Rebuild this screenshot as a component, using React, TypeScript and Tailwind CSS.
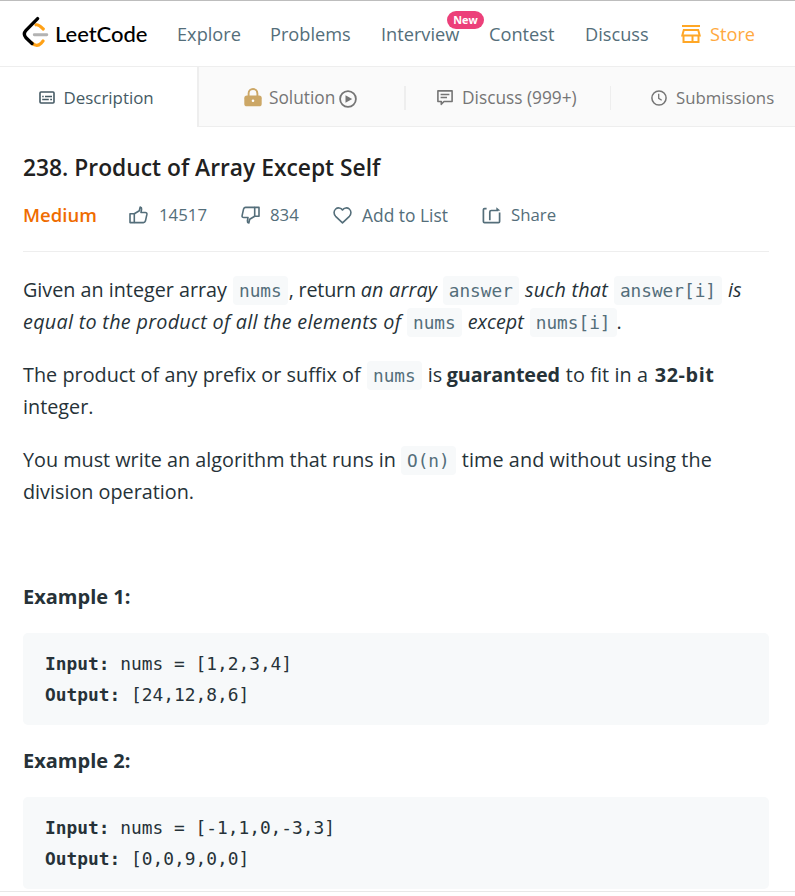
import React from "react";

type IconProps = { className?: string };

const Logo = () => (
  <svg width="27" height="32" viewBox="22 16 27 32" fill="none" strokeLinecap="round" className="mb-[5px] block shrink-0">
    <path d="M36 24.800c3-.6 4.700 1.800 7.300 4.200" stroke="#ffa116" strokeWidth="3.200" />
    <path d="M32 43c3.300 3.200 6 3.300 9 .4l2-2.400" stroke="#ffa116" strokeWidth="3.200" />
    <path d="M34.300 34.700H46.800" stroke="#b3b3b3" strokeWidth="2.900" />
    <path d="M37.600 18.600 26 30.400c-2.100 2.300-2.100 5.100 0 7.400L32 43.500" stroke="#000" strokeWidth="3.300" />
  </svg>
);

const StoreIcon = () => (
  <svg width="20" height="20" viewBox="0 0 20 20" fill="none" stroke="#ffa726" strokeWidth="2" className="block shrink-0">
    <path d="M1 2h18" />
    <path d="M2.800 6h14.400l1.500 5.500H1.300z" />
    <path d="M2.500 11v7h15v-7M11.500 11v7" />
  </svg>
);

const DescriptionIcon = () => (
  <svg width="16" height="13" viewBox="0 0 16 13" fill="none" stroke="#455a64" className="block shrink-0">
    <rect x="1" y="1" width="14" height="11" rx="1" strokeWidth="1.600" />
    <path d="M3.200 5.500h1.500M6 5.500h7M3.200 8.500h6.600M11.200 8.500h1.800" strokeWidth="1.300" />
  </svg>
);

const LockIcon = () => (
  <svg width="18" height="19" viewBox="0 0 18 19" className="block shrink-0">
    <path d="M4.600 9V5.400a4.400 4.400 0 0 1 8.800 0V9" fill="none" stroke="#cca766" strokeWidth="1.900" />
    <rect x=".3" y="7.600" width="17.400" height="10.700" rx="2.600" fill="#cca766" />
    <circle cx="9" cy="12.700" r="1.300" fill="#fff" />
  </svg>
);

const PlayIcon = () => (
  <svg width="18" height="18" viewBox="0 0 18 18" className="block shrink-0">
    <circle cx="9" cy="9" r="7.900" fill="none" stroke="#757575" strokeWidth="1.800" />
    <path d="M6.500 5.200 13.200 9l-6.700 3.800z" fill="#757575" />
  </svg>
);

const CommentIcon = () => (
  <svg width="16" height="16" viewBox="0 0 16 16" fill="none" stroke="#757575" className="block shrink-0">
    <path d="M.9.900h14.200v10.600H7L4.300 14.300v-2.800H.9z" strokeWidth="1.600" strokeLinejoin="round" />
    <path d="M3.600 4.500h8.800M3.600 7.500h6.400" strokeWidth="1.400" />
  </svg>
);

const ClockIcon = () => (
  <svg width="16" height="16" viewBox="0 0 16 16" fill="none" stroke="#757575" strokeWidth="1.500" className="block shrink-0">
    <circle cx="8" cy="8" r="7.100" />
    <path d="M7.700 3.800v4.500l3 1.900" strokeWidth="1.300" />
  </svg>
);

const ThumbIcon = ({ className }: IconProps) => (
  <svg width="19" height="18" viewBox="0 0 19 18" fill="none" stroke="#546e7a" strokeWidth="1.600" strokeLinejoin="round" className={className}>
    <path d="M1 7.800h4.300v8.800H1z" />
    <path d="M5.300 7.800 10.300 4.700 11.200 1q1.600.3 1.400 2.200l-.6 3.300h4.200q2 .1 1.700 1.900l-1.500 6.700q-.5 1.500-2 1.500H5.300" />
  </svg>
);

const HeartIcon = () => (
  <svg width="19" height="17" viewBox="0 0 19 17" fill="none" stroke="#546e7a" strokeWidth="1.600" strokeLinejoin="round" className="block shrink-0">
    <path d="M9.500 3C7.900.5 4.600.3 2.700 2 .5 4 .6 7.200 2.600 9.300l6.900 6.500 6.900-6.500c2-2.100 2.100-5.300-.1-7.300-1.900-1.700-5.200-1.500-6.800 1z" />
  </svg>
);

const ShareIcon = () => (
  <svg width="19" height="17" viewBox="0 0 19 17" fill="none" stroke="#546e7a" strokeWidth="1.700" className="block shrink-0">
    <path d="M4.600 1.600H2.500q-1.100 0-1.100 1.100v11.800q0 1.100 1.100 1.100h14q1.100 0 1.100-1.100V5.500" />
    <path d="M7.800 13.300V5q0-1.500 1.500-1.500h7" />
    <path d="M14.300.3 18.300 3.500l-4 .6z" fill="#546e7a" stroke="none" />
  </svg>
);

const Code = ({ children }: { children: React.ReactNode }) => (
  <code className="inline-block h-[29px] rounded-[4px] bg-[#f7f9fa] px-[6px] align-middle font-['DejaVu_Sans_Mono',monospace] text-[17.75px] leading-[30px] tracking-normal not-italic text-[#546e7a]">
    {children}
  </code>
);

const Line = ({ children }: { children: React.ReactNode }) => (
  <span className="flex h-8 items-center whitespace-pre leading-8">{children}</span>
);

const Example = ({ n, input, output, className }: { n: number; input: string; output: string; className: string }) => (
  <section className={className}>
    <h2 className="text-[20px] leading-8 font-bold">Example {n}:</h2>
    <pre className="mt-5 h-[92px] rounded-[5px] bg-[#f7f9fa] py-[15px] pl-[22px] font-['DejaVu_Sans_Mono',monospace] text-[17.85px] leading-[31px]">
      <strong>Input:</strong> {input}
      {"\n"}
      <strong>Output:</strong> {output}
    </pre>
  </section>
);

export default function App() {
  return (
    <div className="flex h-[896px] w-[795px] flex-col overflow-hidden bg-white font-['Open_Sans',sans-serif] text-[#263238]">
      <header className="flex h-[67px] shrink-0 items-center border-t border-b border-t-[#bdbdbd] border-b-[#eee] pt-[2px] pl-[22px] text-[18.2px] whitespace-nowrap text-[#546e7a]">
        <div className="flex w-[155px] items-center gap-[6px]">
          <Logo />
          <span className="mb-[2px] font-['Lato',sans-serif] text-[22px] leading-6 font-medium tracking-[-0.05px] text-black">LeetCode</span>
        </div>
        <a className="w-[93px]">Explore</a>
        <a className="w-[111px]">Problems</a>
        <a className="relative w-[108px]">
          Interview
          <span className="absolute -top-[10px] left-[66px] h-[18px] w-[37px] rounded-full bg-[#ec407a] text-center text-[10.8px] leading-[18px] font-bold text-white">New</span>
        </a>
        <a className="w-[96px]">Contest</a>
        <a className="w-[96px]">Discuss</a>
        <a className="flex items-center gap-[9px] text-[#ffa940]">
          <StoreIcon />
          Store
        </a>
      </header>

      <nav className="flex h-[60px] shrink-0 text-[16.9px] whitespace-nowrap text-[#757575]">
        <div className="flex w-[197px] items-center gap-[8.500px] pt-px pl-[39px] text-[#455a64]">
          <DescriptionIcon />
          Description
        </div>
        <div className="flex flex-1 items-center border-b border-l-2 border-[#eee] bg-[#fafafa] pt-[2px]">
          <div className="flex h-6 w-[207px] items-center border-r-2 border-[#eee] pl-[45px]">
            <LockIcon />
            <span className="ml-[7px] w-[70px] text-[17.3px]">Solution</span>
            <span className="pt-[3px]"><PlayIcon /></span>
          </div>
          <div className="flex h-6 w-[205px] items-center gap-[9px] border-r border-[#eee] pl-[31px] text-[17.3px]">
            <CommentIcon />
            Discuss (999+)
          </div>
          <div className="flex items-center gap-[9px] pl-10 text-[16.8px]">
            <ClockIcon />
            Submissions
          </div>
        </div>
      </nav>

      <main className="mx-[23px] w-[746px]">
        <h1 className="mt-[25px] text-[22.8px] leading-8 font-semibold text-[#212121]">238. Product of Array Except Self</h1>
        <div className="mt-[10px] flex h-[58px] items-start border-b border-[#eee] text-[16.8px] leading-[42px] whitespace-nowrap text-[#546e7a]">
          <div className="flex h-[42px] items-center">
            <span className="w-[106px] text-[18.5px] font-semibold text-[#ef6c00]">Medium</span>
            <ThumbIcon />
            <span className="ml-[11px] w-[82px]">14517</span>
            <ThumbIcon className="rotate-180" />
            <span className="ml-[10px] w-[63px]">834</span>
            <HeartIcon />
            <span className="ml-[10px] w-[120px] text-[17.4px]">Add to List</span>
            <ShareIcon />
            <span className="ml-[10px]">Share</span>
          </div>
        </div>

        <p className="mt-[22px] text-[19.75px]">
          <Line>
            <span className="w-[210px]">Given an integer array</span>
            <Code>nums</Code>
            <span className="w-[73px] pl-px tracking-[-0.2px]">, return</span>
            <i className="w-[82px] tracking-[0.2px]">an array</i>
            <Code>answer</Code>
            <i className="w-[95px] pl-[6px] tracking-[0.25px]">such that</i>
            <Code>answer[i]</Code>
            <i className="pl-[6px]">is</i>
          </Line>
          <Line>
            <i className="w-[384px] tracking-[0.3px]">equal to the product of all the elements of</i>
            <Code>nums</Code>
            <i className="w-[68px] pl-[6px]">except</i>
            <Code>nums[i]</Code>
            <span>.</span>
          </Line>
        </p>
        <p className="mt-[21px] text-[19.8px]">
          <Line>
            <span className="w-[344px] tracking-[0.03px]">The product of any prefix or suffix of</span>
            <Code>nums</Code>
            <span className="w-[25px] pl-[6px]">is</span>
            <b className="w-[119px] tracking-[-0.15px]">guaranteed</b>
            <span className="w-[89px] tracking-[0.1px]">to fit in a</span>
            <b className="tracking-[0.6px]">32-bit</b>
          </Line>
          <Line>integer.</Line>
        </p>
        <p className="mt-[21px] text-[19.8px]">
          <Line>
            <span className="w-[378px]">You must write an algorithm that runs in</span>
            <Code>O(n)</Code>
            <span className="pl-[6px] tracking-[0.1px]">time and without using the</span>
          </Line>
          <Line>division operation.</Line>
        </p>

        <Example n={1} input="nums = [1,2,3,4]" output="[24,12,8,6]" className="mt-[73px]" />
        <Example n={2} input="nums = [-1,1,0,-3,3]" output="[0,0,9,0,0]" className="mt-5" />
      </main>
      <div className="mt-[2px] h-px shrink-0 bg-[#e8e8e8]" />
    </div>
  );
}
